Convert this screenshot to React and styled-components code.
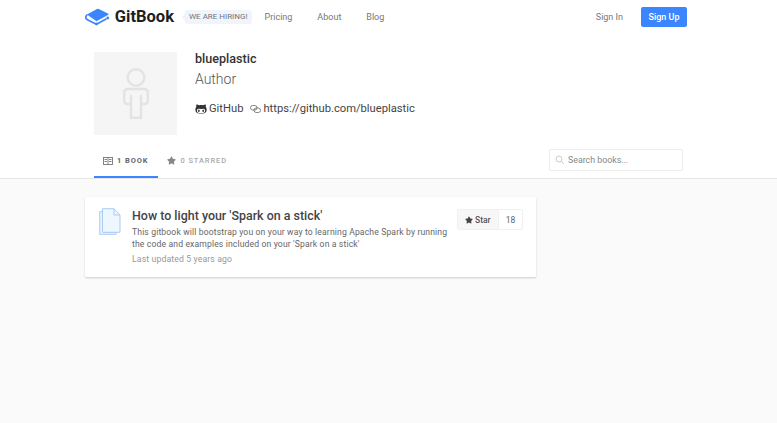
import styled, { createGlobalStyle } from "styled-components";
import { FaStar, FaGithubAlt } from "react-icons/fa";

const GlobalStyle = createGlobalStyle`
    html, body {
        margin: 0;
        padding: 0;
        height: 100%;
        background: #fafafa;
        font-family: Roboto, "Liberation Sans", sans-serif;
        color: #333;
    }
`;
const Page = styled.div`
    width: 777px;
    height: 423px;
    overflow: hidden;
    background: #fafafa;
`;
const TopArea = styled.div`
    background: #fff;
    border-bottom: 1px solid #e6e6e6;
    height: 179px;
    box-sizing: border-box;
`;
const Container = styled.div`
    width: 607px;
    margin: 0 auto;
`;
const Nav = styled.div`
    display: flex;
    align-items: center;
    height: 33px;
    padding-right: 5px;
`;
const Logo = styled.div`
    display: flex;
    align-items: center;
    gap: 5px;
    font-size: 16.5px;
    font-weight: 700;
    color: #1d1f21;
    width: 89px;
`;
const HiringBadge = styled.div`
    position: relative;
    margin-left: 11px;
    height: 14px;
    line-height: 14px;
    padding: 0 4px;
    font-size: 8px;
    color: #6f7478;
    background: #f1f4fb;
    border-radius: 3px;
    &::before {
        content: "";
        position: absolute;
        left: -3px;
        top: 3px;
        border-top: 4px solid transparent;
        border-bottom: 4px solid transparent;
        border-right: 3px solid #f1f4fb;
    }
`;
const NavLinks = styled.div`
    display: flex;
    margin-left: 13px;
    gap: 25px;
`;
const NavLink = styled.a`
    font-size: 9px;
    color: #777;
`;
const NavRight = styled.div`
    margin-left: auto;
    display: flex;
    align-items: center;
    gap: 18px;
`;
const SignUp = styled.a`
    width: 46px;
    height: 20px;
    line-height: 20px;
    text-align: center;
    font-size: 9px;
    font-weight: 500;
    color: #fff;
    background: #3b86ff;
    border-radius: 2px;
`;
const Profile = styled.div`
    display: flex;
    padding: 19px 0 0 9px;
    height: 93px;
`;
const Avatar = styled.div`
    width: 83px;
    height: 83px;
    background: #f5f5f5;
    display: flex;
    align-items: center;
    justify-content: center;
    margin-right: 18px;
`;
const ProfileInfo = styled.div`
    display: flex;
    flex-direction: column;
`;
const UserName = styled.div`
    font-size: 12.6px;
    font-weight: 500;
    line-height: 14px;
    color: #333;
`;
const Role = styled.div`
    font-size: 14px;
    font-weight: 300;
    line-height: 17px;
    margin-top: 5px;
    color: #555;
`;
const Links = styled.div`
    display: flex;
    align-items: center;
    margin-top: 13px;
    font-size: 11.2px;
    line-height: 15px;
    color: #444;
`;
const LinkItem = styled.span`
    display: flex;
    align-items: center;
    gap: 2px;
    margin-right: 7px;
`;
const TabBar = styled.div`
    display: flex;
    justify-content: space-between;
    align-items: flex-start;
    padding-left: 9px;
`;
const Tabs = styled.div`
    display: flex;
`;
const Tab = styled.div`
    display: flex;
    align-items: center;
    gap: 4px;
    height: 33px;
    box-sizing: border-box;
    padding: 0 10px 0 9px;
    font-size: 7.5px;
    font-weight: ${(p) => (p.$active ? 700 : 500)};
    letter-spacing: 0.9px;
    color: ${(p) => (p.$active ? "#666" : "#aaa")};
    border-bottom: 2px solid ${(p) => (p.$active ? "#3b86ff" : "transparent")};
`;
const SearchBox = styled.div`
    display: flex;
    align-items: center;
    gap: 3px;
    width: 134px;
    height: 22px;
    box-sizing: border-box;
    margin: 4px 9px 0 0;
    padding-left: 5px;
    border: 1px solid #eee;
    border-radius: 2px;
    font-size: 8.8px;
    color: #888;
`;
const Content = styled.div`
    padding-top: 18px;
`;
const Card = styled.div`
    display: flex;
    width: 451px;
    height: 80px;
    box-sizing: border-box;
    padding: 11px 13px 0 14px;
    background: #fff;
    box-shadow: 0 1px 2px rgba(0, 0, 0, 0.18);
    border-radius: 1px;
`;
const CardIcon = styled.div`
    width: 33px;
    flex-shrink: 0;
`;
const CardBody = styled.div`
    width: 319px;
`;
const BookTitle = styled.div`
    font-size: 12.45px;
    font-weight: 500;
    line-height: 16px;
    color: #444;
`;
const Description = styled.div`
    font-size: 8.6px;
    line-height: 12px;
    margin-top: 2px;
    color: #666;
    letter-spacing: 0.14px;
`;
const Updated = styled.div`
    font-size: 8.7px;
    line-height: 12px;
    margin-top: 3px;
    color: #999;
    letter-spacing: 0.12px;
`;
const StarGroup = styled.div`
    display: flex;
    height: 21px;
    margin: 1px 0 0 7px;
    font-size: 8.5px;
    border: 1px solid #f0f0f0;
    border-radius: 2px;
    box-sizing: border-box;
`;
const StarButton = styled.div`
    display: flex;
    align-items: center;
    gap: 2px;
    width: 41px;
    box-sizing: border-box;
    padding-left: 7px;
    background: #f7f7f7;
    font-weight: 500;
    color: #555;
    border-right: 1px solid #f0f0f0;
`;
const StarCount = styled.div`
    display: flex;
    align-items: center;
    justify-content: center;
    width: 23px;
    color: #666;
`;

const BookLogo = () => (
    <svg width="26" height="18" viewBox="0 0 26 18">
        <path d="M2 6.5 L12.5 0.6 Q13.5 0.1 14.5 0.6 L24.5 5.6 Q25.2 6 24.5 6.6 L12 13.5 Z" fill="#3b86ff" />
        <path d="M2.5 6.5 Q0.4 8 0.9 10 Q1.2 11.3 3 12.2 L12 16.5 L22.5 10.8" fill="none" stroke="#3b86ff" strokeWidth="1.8" />
        <circle cx="23.8" cy="10" r="1.5" fill="#3b86ff" />
        <circle cx="12" cy="16.2" r="1.4" fill="#3b86ff" />
    </svg>
);
const AvatarIcon = () => (
    <svg width="26" height="51" viewBox="0 0 26 51" fill="none" stroke="#e3e3e3" strokeWidth="2.4">
        <circle cx="13" cy="9.5" r="8.3" />
        <path d="M8 36 H4.5 Q1.2 36 1.2 33 V25 Q1.2 21 5 21 H21 Q24.8 21 24.8 25 V33 Q24.8 36 21.5 36 H18" />
        <path d="M8 27 V49.8 H18 V27" />
    </svg>
);
const LinkIcon = () => (
    <svg width="11" height="8" viewBox="0 0 11 8" fill="none" stroke="#666" strokeWidth="0.8">
        <rect x="0.5" y="0.5" width="6.5" height="4.5" rx="2.2" />
        <rect x="4" y="3" width="6.5" height="4.5" rx="2.2" />
    </svg>
);
const OpenBookIcon = () => (
    <svg width="10" height="8" viewBox="0 0 10 8" fill="none" stroke="#777" strokeWidth="0.9">
        <rect x="0.5" y="0.5" width="9" height="7" />
        <path d="M5 0.5 V7.5 M1.5 2.5 H4 M1.5 4.5 H4 M6 2.5 H8.5 M6 4.5 H8.5" />
    </svg>
);
const SearchIcon = () => (
    <svg width="10" height="10" viewBox="0 0 10 10" fill="none" stroke="#ccc" strokeWidth="1">
        <circle cx="4" cy="4" r="3" />
        <path d="M6.2 6.2 L9 9" />
    </svg>
);
const DocIcon = () => (
    <svg width="22" height="27" viewBox="0 0 22 27">
        <path d="M0.7 3.5 H4 V24 H17 V26.3 H0.7 Z" fill="#e8f3ff" stroke="#a9cdf5" strokeWidth="1" />
        <path d="M3.5 0.7 H15 L21 7 V24.3 H3.5 Z" fill="#eef6ff" stroke="#a9cdf5" strokeWidth="1" />
        <path d="M15 0.7 V7 H21" fill="none" stroke="#a9cdf5" strokeWidth="1" />
    </svg>
);

const App = () => {
    return (
        <Page>
            <GlobalStyle />
            <TopArea>
                <Container>
                    <Nav>
                        <Logo>
                            <BookLogo />
                            GitBook
                        </Logo>
                        <HiringBadge>WE ARE HIRING!</HiringBadge>
                        <NavLinks>
                            <NavLink>Pricing</NavLink>
                            <NavLink>About</NavLink>
                            <NavLink>Blog</NavLink>
                        </NavLinks>
                        <NavRight>
                            <NavLink>Sign In</NavLink>
                            <SignUp>Sign Up</SignUp>
                        </NavRight>
                    </Nav>
                    <Profile>
                        <Avatar>
                            <AvatarIcon />
                        </Avatar>
                        <ProfileInfo>
                            <UserName>blueplastic</UserName>
                            <Role>Author</Role>
                            <Links>
                                <LinkItem>
                                    <FaGithubAlt size={12} color="#333" />
                                    GitHub
                                </LinkItem>
                                <LinkItem>
                                    <LinkIcon />
                                    https://github.com/blueplastic
                                </LinkItem>
                            </Links>
                        </ProfileInfo>
                    </Profile>
                    <TabBar>
                        <Tabs>
                            <Tab $active>
                                <OpenBookIcon />
                                1 BOOK
                            </Tab>
                            <Tab>
                                <FaStar size={9} color="#888" />
                                0 STARRED
                            </Tab>
                        </Tabs>
                        <SearchBox>
                            <SearchIcon />
                            Search books...
                        </SearchBox>
                    </TabBar>
                </Container>
            </TopArea>
            <Container>
                <Content>
                    <Card>
                        <CardIcon>
                            <DocIcon />
                        </CardIcon>
                        <CardBody>
                            <BookTitle>How to light your 'Spark on a stick'</BookTitle>
                            <Description>
                                This gitbook will bootstrap you on your way to learning Apache Spark by running the code and examples included on your 'Spark on a stick'
                            </Description>
                            <Updated>Last updated 5 years ago</Updated>
                        </CardBody>
                        <StarGroup>
                            <StarButton>
                                <FaStar size={8} color="#444" />
                                Star
                            </StarButton>
                            <StarCount>18</StarCount>
                        </StarGroup>
                    </Card>
                </Content>
            </Container>
        </Page>
    );
};
export default App;
